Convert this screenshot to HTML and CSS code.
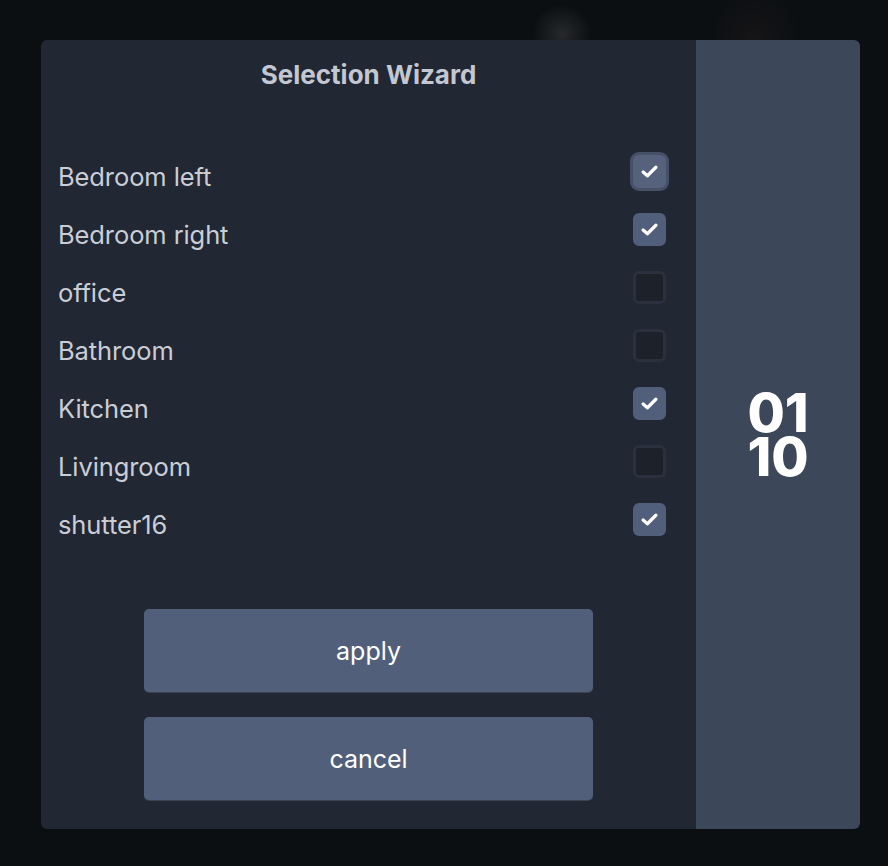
FILE: index.html
```html
<!DOCTYPE html>
<html lang="en">
<head>
<meta charset="utf-8">
<title>Selection Wizard</title>
<link rel="stylesheet" href="styles.css">
</head>
<body>
<div class="backdrop">
  <div class="modal">
    <div class="main">
      <h1 class="title">Selection Wizard</h1>
      <ul class="list">
        <li class="row"><span class="label">Bedroom left</span><span class="box checked focus"><svg viewBox="0 0 16 12" class="tick"><path d="M2 6.5 L6 10 L14 2"/></svg></span></li>
        <li class="row"><span class="label">Bedroom right</span><span class="box checked"><svg viewBox="0 0 16 12" class="tick"><path d="M2 6.5 L6 10 L14 2"/></svg></span></li>
        <li class="row"><span class="label">office</span><span class="box"></span></li>
        <li class="row"><span class="label">Bathroom</span><span class="box"></span></li>
        <li class="row"><span class="label">Kitchen</span><span class="box checked"><svg viewBox="0 0 16 12" class="tick"><path d="M2 6.5 L6 10 L14 2"/></svg></span></li>
        <li class="row"><span class="label">Livingroom</span><span class="box"></span></li>
        <li class="row"><span class="label">shutter16</span><span class="box checked"><svg viewBox="0 0 16 12" class="tick"><path d="M2 6.5 L6 10 L14 2"/></svg></span></li>
      </ul>
      <div class="actions">
        <button class="btn">apply</button>
        <button class="btn">cancel</button>
      </div>
    </div>
    <div class="side">
      <div class="logo"><span class="logo-line">01</span><span class="logo-line">10</span></div>
    </div>
  </div>
</div>
</body>
</html>
```
FILE: styles.css
```css
* { box-sizing: border-box; }
html, body { margin: 0; padding: 0; }
body {
  width: 888px;
  height: 866px;
  overflow: hidden;
  background: #0c0f12;
  font-family: Inter, "Noto Sans", "Liberation Sans", sans-serif;
}
.backdrop {
  width: 888px;
  height: 866px;
  padding: 40px 28px 37px 41px;
  background:
    radial-gradient(circle at 562px 34px, rgba(60,62,66,0.55) 0, rgba(12,15,18,0) 30px),
    radial-gradient(ellipse at 755px 40px, rgba(40,30,30,0.35) 0, rgba(12,15,18,0) 45px),
    #0c0f12;
}
.modal {
  display: flex;
  height: 789px;
  border-radius: 6px;
  overflow: hidden;
}
.main {
  width: 655px;
  background: #212733;
  padding: 20px 30px 29px 17px;
  display: flex;
  flex-direction: column;
}
.title {
  margin: 0;
  height: 30px;
  line-height: 30px;
  text-align: center;
  font-size: 26px;
  font-weight: 700;
  color: #c3c7d1;
  padding-left: 13px;
}
.list {
  list-style: none;
  margin: 57px 0 0 0;
  padding: 0;
}
.row {
  height: 58px;
  display: flex;
  align-items: center;
  justify-content: space-between;
}
.label {
  font-size: 25.5px;
  color: #c9cdd6;
  letter-spacing: -0.1px;
}
.box {
  width: 33px;
  height: 33px;
  border-radius: 6px;
  background: #1d212a;
  border: 3px solid #2a303d;
  margin-bottom: 9px;
  display: flex;
  align-items: center;
  justify-content: center;
}
.box.checked {
  background: #525f7b;
  border-color: #525f7b;
}
.box.focus {
  box-shadow: 0 0 0 3px #465066;
  background: #56627c;
  border-color: #56627c;
}
.tick {
  width: 17px;
  height: 13px;
  fill: none;
  stroke: #ffffff;
  stroke-width: 3;
  stroke-linecap: round;
  stroke-linejoin: round;
}
.actions {
  margin-top: auto;
  display: flex;
  flex-direction: column;
  align-items: center;
  gap: 25px;
  padding-left: 13px;
}
.btn {
  width: 449px;
  height: 83px;
  border: none;
  border-radius: 5px;
  background: #515f7a;
  color: #ffffff;
  font-family: Inter, "Noto Sans", "Liberation Sans", sans-serif;
  font-size: 25px;
  box-shadow: 0 1px 0 #3a4254;
}
.side {
  flex: 1;
  background: #3d475a;
  display: flex;
  align-items: center;
  justify-content: center;
}
.logo {
  display: flex;
  flex-direction: column;
  align-items: center;
  color: #ffffff;
  font-weight: 800;
  font-size: 54px;
  letter-spacing: 0;
}
.logo-line {
  display: block;
  height: 44px;
  line-height: 44px;
  overflow: visible;
}
```
